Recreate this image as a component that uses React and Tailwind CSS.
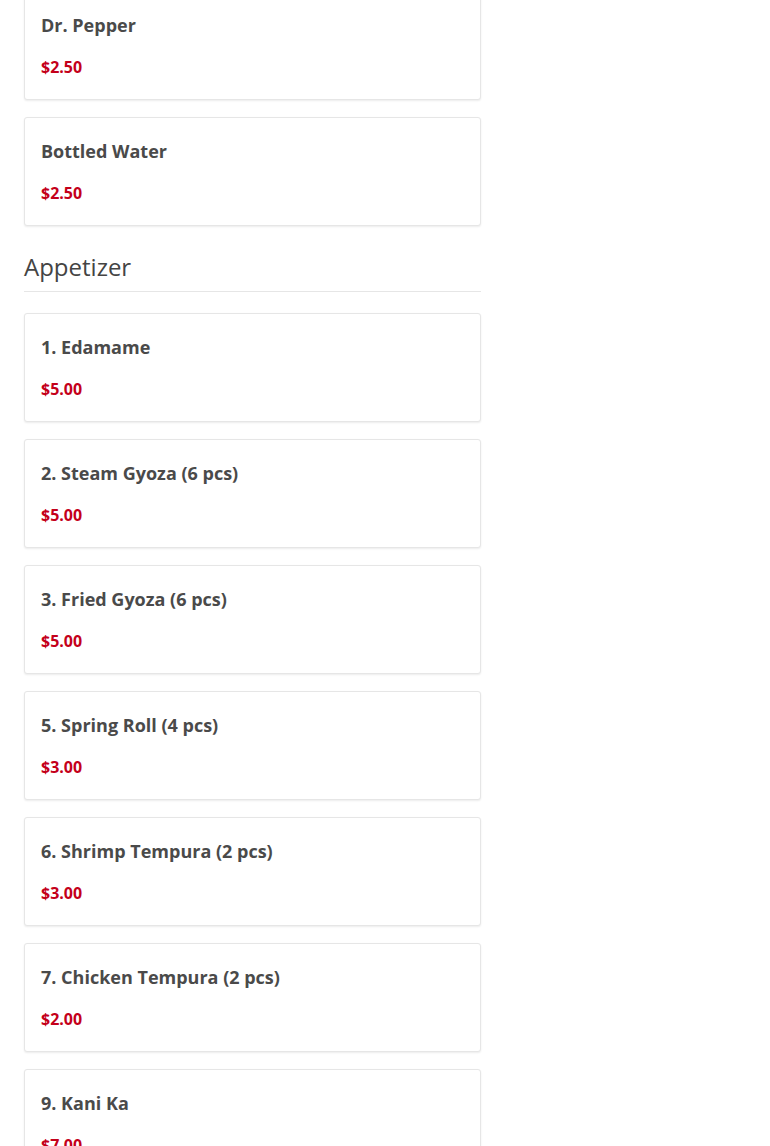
const drinks = [
  { name: 'Dr. Pepper', price: '$2.50' },
  { name: 'Bottled Water', price: '$2.50' },
]

const appetizers = [
  { name: '1. Edamame', price: '$5.00' },
  { name: '2. Steam Gyoza (6 pcs)', price: '$5.00' },
  { name: '3. Fried Gyoza (6 pcs)', price: '$5.00' },
  { name: '5. Spring Roll (4 pcs)', price: '$3.00' },
  { name: '6. Shrimp Tempura (2 pcs)', price: '$3.00' },
  { name: '7. Chicken Tempura (2 pcs)', price: '$2.00' },
  { name: '9. Kani Ka', price: '$7.00' },
]

function ItemCard({ item }) {
  return (
    <div className="mb-[17px] h-[109px] rounded-[3px] border border-[#e6e6e6] bg-white px-4 pt-5 shadow-[0_1px_2px_rgba(0,0,0,0.08)]">
      <div className="text-[18px] font-bold leading-[27px] text-[#4a4a4a]">{item.name}</div>
      <div className="mt-[17px] text-[16px] font-bold leading-[22px] text-[#c4001a]">{item.price}</div>
    </div>
  )
}

export default function App() {
  return (
    <div className="h-[1146px] overflow-hidden bg-white" style={{ fontFamily: '"Open Sans", sans-serif' }}>
      <div className="ml-6 mt-[-9px] w-[457px]">
        {drinks.map(item => <ItemCard key={item.name} item={item} />)}
        <div className="mt-[24px] border-b border-[#e6e6e6] pb-[7px] text-[24px] leading-[34px] text-[#444]">Appetizer</div>
        <div className="mt-[21px]">
          {appetizers.map(item => <ItemCard key={item.name} item={item} />)}
        </div>
      </div>
    </div>
  )
}
